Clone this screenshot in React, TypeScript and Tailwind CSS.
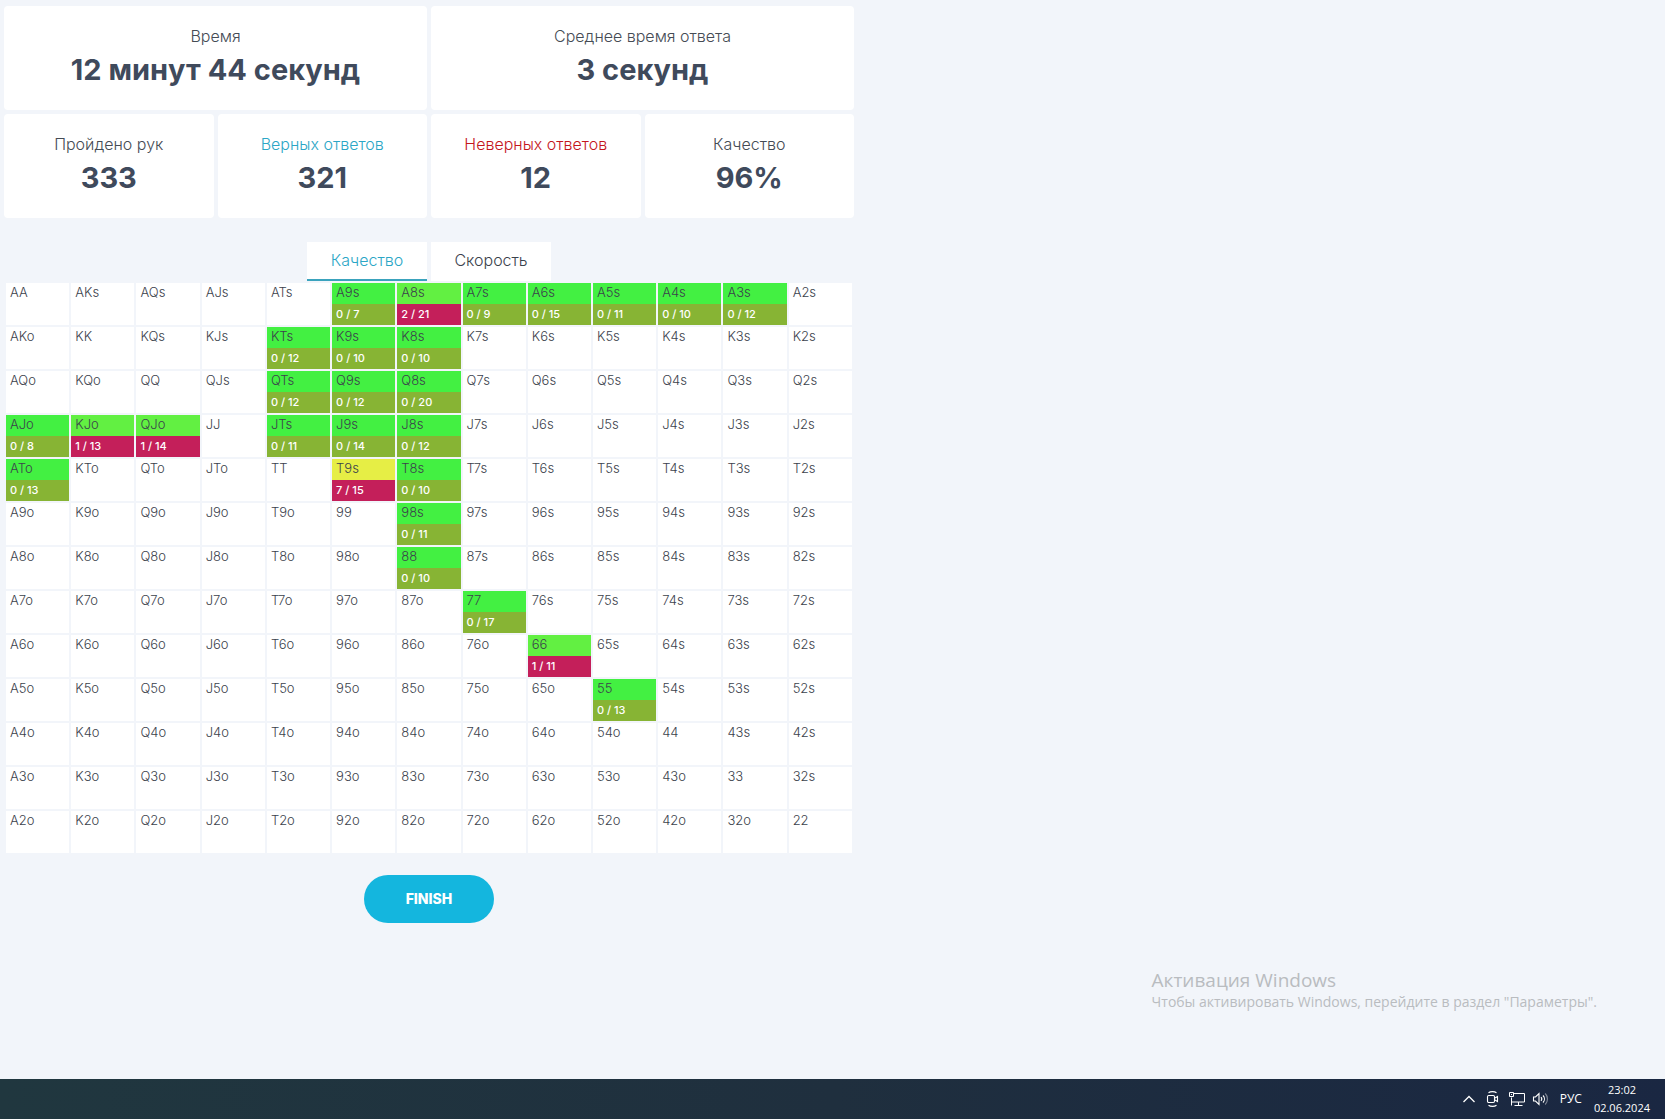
import { useState } from 'react'
import clsx from 'clsx'

const ranks = ['A', 'K', 'Q', 'J', 'T', '9', '8', '7', '6', '5', '4', '3', '2']

// [mistakes, hands played]
const results: Record<string, [number, number]> = {
  A9s: [0, 7],
  A8s: [2, 21],
  A7s: [0, 9],
  A6s: [0, 15],
  A5s: [0, 11],
  A4s: [0, 10],
  A3s: [0, 12],
  KTs: [0, 12],
  K9s: [0, 10],
  K8s: [0, 10],
  QTs: [0, 12],
  Q9s: [0, 12],
  Q8s: [0, 20],
  AJo: [0, 8],
  KJo: [1, 13],
  QJo: [1, 14],
  JTs: [0, 11],
  J9s: [0, 14],
  J8s: [0, 12],
  ATo: [0, 13],
  T9s: [7, 15],
  T8s: [0, 10],
  '98s': [0, 11],
  '88': [0, 10],
  '77': [0, 17],
  '66': [1, 11],
  '55': [0, 13],
}

const getHand = (row: number, col: number) => {
  if (row === col) return ranks[row] + ranks[col]
  if (row < col) return ranks[row] + ranks[col] + 's'
  return ranks[col] + ranks[row] + 'o'
}

const getColor = (wrong: number, total: number) => {
  if (wrong === 0) return 'bg-[#43f042]'
  return wrong / total > 0.3 ? 'bg-[#e6ee45]' : 'bg-[#62f042]'
}

const Card = ({
  title,
  value,
  color = 'text-[#454b54]',
  wide = false,
}: {
  title: string
  value: string
  color?: string
  wide?: boolean
}) => (
  <div
    className={clsx(
      'rounded-sm bg-white px-2 pt-[18px] pb-[22px] text-center',
      wide && 'col-span-2'
    )}
  >
    <h4 className={clsx('text-base font-light leading-6', color)}>{title}</h4>
    <p className="mt-1 text-[29px] font-bold leading-9 text-[#3f4a5c]">{value}</p>
  </div>
)

const HandCell = ({ hand }: { hand: string }) => {
  const result = results[hand]
  return (
    <td className="h-[42px] bg-white p-0 align-top">
      <div
        className={clsx(
          'h-[21px] pl-1 text-[13px] font-light leading-[18px] text-[#3b424c]',
          result && getColor(result[0], result[1])
        )}
      >
        {hand}
      </div>
      {result && (
        <div
          className={clsx(
            'h-[21px] pl-1 text-[11px] font-medium leading-5 text-white',
            result[0] > 0 ? 'bg-[#c41f5a]' : 'bg-[#87b434]'
          )}
        >
          {result[0]} / {result[1]}
        </div>
      )}
    </td>
  )
}

const Taskbar = () => (
  <footer className="flex h-10 items-center justify-end bg-linear-to-r from-[#20373f] via-[#1f2f3e] to-[#1a2742] pr-[15px] font-['Open_Sans',sans-serif] text-xs text-white">
    <button aria-label="Скрытые значки" className="mr-2.5">
      <svg width="14" height="16" viewBox="0 0 14 16" fill="none" stroke="currentColor" strokeWidth="1.3">
        <path d="M1.5 11 7 5.5 12.5 11" />
      </svg>
    </button>
    <button aria-label="Камера" className="mr-2">
      <svg width="14" height="18" viewBox="0 0 14 18" fill="none" stroke="currentColor" strokeWidth="1.1">
        <rect x="1.5" y="5.5" width="7" height="7" rx="1.2" />
        <path d="M8.5 8.2 11.5 6.5v5L8.5 9.8M2.5 2.8C4.5 1.2 8.5 1.2 10.5 2.8M2.5 15.2C4.5 16.8 8.5 16.8 10.5 15.2" />
      </svg>
    </button>
    <button aria-label="Сеть" className="mr-1.5">
      <svg width="18" height="16" viewBox="0 0 18 16" fill="none" stroke="currentColor">
        <path d="M6 2.5h10.5v8.5H3.5V6.5M1.5 1.5h4v4h-4zM3.500 3v1M10.5 11v3M6.5 14.5h8M3.5 11v3.5" />
      </svg>
    </button>
    <button aria-label="Громкость" className="mr-2.5">
      <svg width="18" height="16" viewBox="0 0 18 16" fill="none" stroke="currentColor" strokeWidth="1.1">
        <path d="M1.5 6h2l3.5-3.5v11L3.5 10h-2zM9 6.2c.9 1 .9 2.6 0 3.6M11 4.5c1.9 2 1.9 5 0 7" />
        <path d="M13.2 2.5c3 3 3 8 0 11" opacity=".45" />
      </svg>
    </button>
    <button className="mr-3">РУС</button>
    <div className="text-center text-[11px] leading-[18px]">
      <p>23:02</p>
      <p>02.06.2024</p>
    </div>
  </footer>
)

const App = () => {
  const [tab, setTab] = useState('Качество')

  return (
    <div className="flex min-h-screen flex-col bg-[#f2f5fa] font-[Inter,sans-serif]">
      <main className="flex w-full max-w-[858px] flex-col px-1 pt-1.5">
        <section className="grid grid-cols-4 gap-1">
          <Card title="Время" value="12 минут 44 секунд" wide />
          <Card title="Среднее время ответа" value="3 секунд" wide />
          <Card title="Пройдено рук" value="333" />
          <Card title="Верных ответов" value="321" color="text-[#2ba6c6]" />
          <Card title="Неверных ответов" value="12" color="text-[#c4161c]" />
          <Card title="Качество" value="96%" />
        </section>

        <div className="mt-6 flex justify-center gap-1">
          {['Качество', 'Скорость'].map((name) => (
            <button
              key={name}
              onClick={() => setTab(name)}
              className={clsx(
                'h-[39px] w-[120px] border-b-2 bg-white pb-0.5 text-base font-light',
                tab === name
                  ? 'border-[#3aa3bd] text-[#2ba6c6]'
                  : 'border-white text-[#3b424c]'
              )}
            >
              {name}
            </button>
          ))}
        </div>

        <table className="w-full table-fixed border-separate border-spacing-0.5">
          <tbody>
            {ranks.map((rank, row) => (
              <tr key={rank}>
                {ranks.map((_, col) => (
                  <HandCell key={col} hand={getHand(row, col)} />
                ))}
              </tr>
            ))}
          </tbody>
        </table>

        <button className="mt-5 h-12 w-[130px] self-center rounded-full bg-[#14b6de] text-sm font-extrabold text-white">
          FINISH
        </button>
      </main>

      <aside className="mt-auto mb-[67px] self-end pr-[68px] font-['Open_Sans',sans-serif] text-[#b9bcc0]">
        <h2 className="text-[19px] leading-6">Активация Windows</h2>
        <p className="text-sm leading-5">
          Чтобы активировать Windows, перейдите в раздел "Параметры".
        </p>
      </aside>

      <Taskbar />
    </div>
  )
}

export default App
